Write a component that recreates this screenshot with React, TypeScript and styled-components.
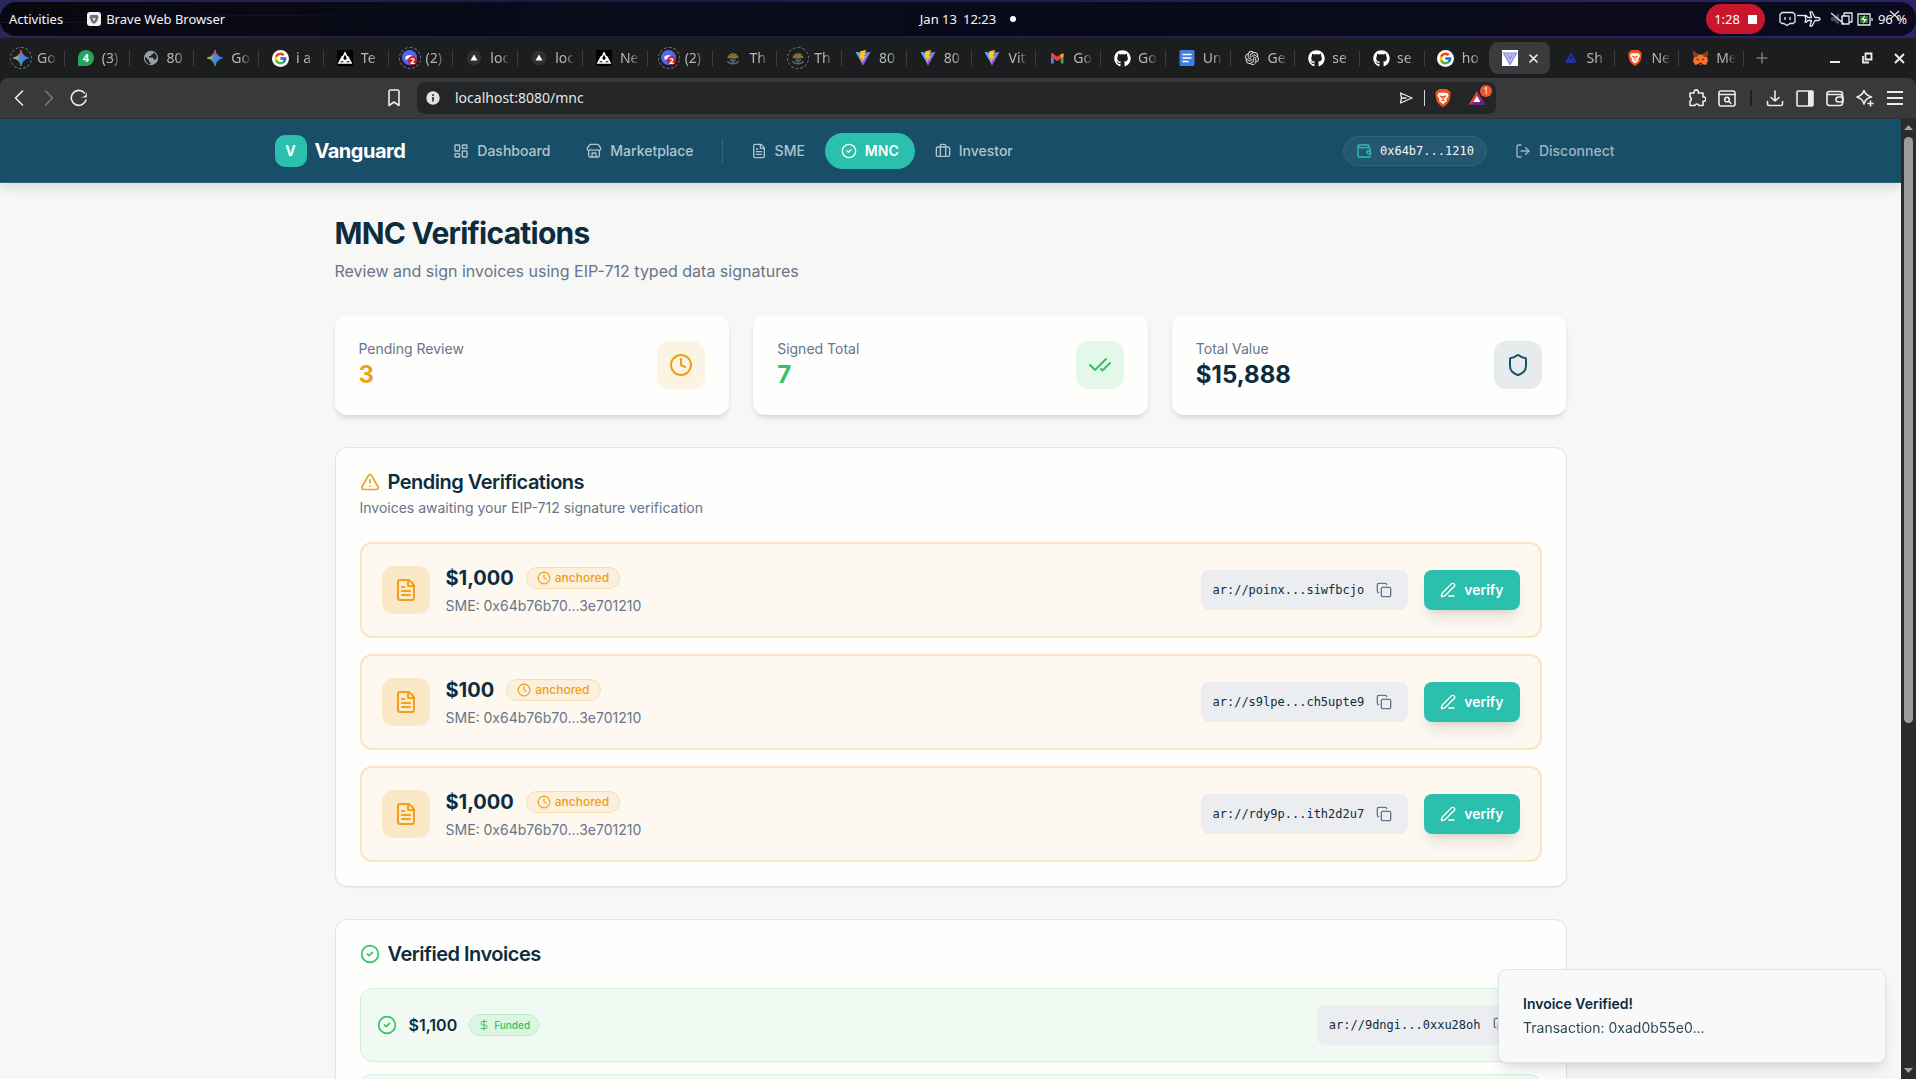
import React from 'react';
import styled, { createGlobalStyle, css } from 'styled-components';
import {
  Briefcase,
  CheckCheck,
  CircleCheck,
  Clock,
  Copy,
  DollarSign,
  FileText,
  LayoutDashboard,
  LogOut,
  PenLine,
  Shield,
  Store,
  TriangleAlert,
  Wallet,
} from 'lucide-react';
import { FcGoogle } from 'react-icons/fc';
import { FaGithub } from 'react-icons/fa';
import { SiOpenai } from 'react-icons/si';

const color = {
  ink: '#0d2c3d',
  muted: '#677489',
  page: '#f7f8f6',
  card: '#fefefd',
  line: '#e0e4e5',
  nav: '#184e68',
  teal: '#2bc0ae',
  amber: '#eca01c',
  green: '#2fc463',
  chip: '#ebedf0',
};

const uiFont = '"Noto Sans", "Open Sans", sans-serif';
const appFont = 'Inter, "Liberation Sans", sans-serif';
const monoFont = '"DejaVu Sans Mono", "Liberation Mono", monospace';

const GlobalStyle = createGlobalStyle`
  *, *::before, *::after { box-sizing: border-box; }
  body { margin: 0; background: #1b1d1e; font-family: ${appFont}; }
  h1, h2, p, ul { margin: 0; padding: 0; }
  button { border: 0; background: none; padding: 0; margin: 0; color: inherit; font: inherit; cursor: pointer; }
  svg { display: block; flex: none; }
`;

/* ---------- Desktop shell ---------- */

const Desktop = styled.div`
  display: flex;
  flex-direction: column;
  height: 100vh;
  overflow: hidden;
`;

const SystemBar = styled.header`
  flex: none;
  height: 38px;
  padding: 2px 0;
  background: linear-gradient(90deg, #2b2659, #1b1a3d 30%, #221d50 60%, #2b2468);
  color: #f4f4f6;
  font: 13px/18px ${uiFont};
`;

const SystemBarInner = styled.div`
  display: grid;
  grid-template-columns: 1fr auto 1fr;
  align-items: center;
  height: 34px;
  padding: 0 9px;
  border-radius: 16px;
  background:
    radial-gradient(ellipse at 2% 60%, #191637 0, transparent 4%),
    radial-gradient(ellipse at 14% 40%, #14132c 0, transparent 5%),
    linear-gradient(90deg, #07080f, #0a0b1b 30%, #090a19 60%, #0b0a1e);
`;

const SystemGroup = styled.div<{ $end?: boolean }>`
  display: flex;
  align-items: center;
  justify-content: ${(p) => (p.$end ? 'flex-end' : 'flex-start')};
  gap: ${(p) => (p.$end ? '14px' : '24px')};
`;

const AppLabel = styled.button`
  display: flex;
  align-items: center;
  gap: 5px;
`;

const DateLabel = styled.button`
  display: flex;
  align-items: center;
  gap: 6px;
  padding-left: 20px;
`;

const NotifyDot = styled.span`
  width: 6px;
  height: 6px;
  margin-left: 8px;
  border-radius: 50%;
  background: #fff;
`;

const RecordPill = styled.button`
  display: flex;
  align-items: center;
  gap: 8px;
  height: 30px;
  padding: 0 8px;
  border-radius: 15px;
  background: #c8172c;
  color: #fff;
`;

const StopSquare = styled.span`
  width: 9px;
  height: 9px;
  background: #fff;
`;

const StatusArea = styled.div`
  display: flex;
  align-items: center;
  gap: 2px;
`;

const Battery = styled.span`
  position: relative;
  display: block;
  white-space: nowrap;

  svg {
    position: absolute;
    left: 9px;
    top: 0;
  }
`;

/* ---------- Browser chrome ---------- */

const TabStrip = styled.div`
  display: flex;
  align-items: center;
  flex: none;
  height: 40px;
  background: #1b1d1e;
  font: 14px/20px ${uiFont};
`;

const Tabs = styled.div`
  display: flex;
  flex: 1;
  min-width: 0;
`;

const TabButton = styled.button`
  display: flex;
  align-items: center;
  flex: 1 1 0;
  gap: 6px;
  min-width: 0;
  height: 32px;
  padding-left: 11px;
  color: #b4b7b8;
  text-align: left;

  &::after {
    content: '';
    width: 1px;
    height: 16px;
    margin-left: auto;
    background: #3b3e40;
  }
`;

const ActiveTab = styled.div`
  display: flex;
  align-items: center;
  justify-content: space-between;
  flex: none;
  width: 60px;
  height: 32px;
  padding: 0 10px 0 12px;
  border-radius: 8px;
  background: #393b3d;
  color: #f1f1f1;

  button { display: grid; place-items: center; width: 12px; height: 16px; }
`;

const TabTitle = styled.span`
  width: 24px;
  white-space: nowrap;
  mask-image: linear-gradient(90deg, #000 10px, transparent 20px);
`;

const Favicon = styled.span<{ $ring?: boolean }>`
  display: grid;
  place-items: center;
  flex: none;
  width: 20px;
  height: 20px;
  border-radius: 50%;
  ${(p) =>
    p.$ring &&
    css`
      outline: 1px dashed #6f7375;
    `}
`;

const WindowControls = styled.div`
  display: flex;
  align-items: center;
  flex: none;
  width: 172px;
  padding: 0 7px 0 8px;
  color: #f1f1f1;
`;

const WindowButtons = styled.div`
  display: flex;
  gap: 12px;
  margin-left: auto;
`;

const Toolbar = styled.div`
  display: grid;
  grid-template-columns: 417px 1fr 420px;
  align-items: center;
  flex: none;
  height: 41px;
  background: #38393b;
  border-bottom: 1px solid #303133;
  border-radius: 8px 8px 0 0;
  color: #f0f0f0;
`;

const ToolGroup = styled.div<{ $side: 'start' | 'end' }>`
  display: flex;
  align-items: center;
  gap: 10px;
  padding: ${(p) => (p.$side === 'start' ? '0 13px 0 9px' : '0 11px')};
  justify-content: ${(p) => (p.$side === 'start' ? 'flex-start' : 'flex-end')};
`;

const ToolButton = styled.button<{ $dim?: boolean; $push?: boolean }>`
  display: grid;
  place-items: center;
  width: 20px;
  height: 24px;
  margin-left: ${(p) => (p.$push ? 'auto' : '0')};
  color: ${(p) => (p.$dim ? '#77797b' : '#ececec')};
`;

const ToolDivider = styled.span`
  width: 2px;
  height: 16px;
  margin: 0 3px;
  background: #1f2021;
`;

const AddressBar = styled.div`
  display: flex;
  align-items: center;
  gap: 15px;
  height: 32px;
  padding: 0 9px;
  border-radius: 8px;
  background: #232527;
`;

const AddressInput = styled.input`
  flex: 1;
  min-width: 0;
  border: 0;
  padding: 0;
  outline: 0;
  background: none;
  color: #e4e6e7;
  font: 14px/20px ${uiFont};
`;

const AddressActions = styled.div`
  display: flex;
  align-items: center;
  gap: 8px;
`;

const AddressDivider = styled.span`
  width: 1px;
  height: 16px;
  background: #d4d4d4;
`;

const RewardsButton = styled(ToolButton)`
  position: relative;
  margin-left: 6px;
`;

const RewardsBadge = styled.span`
  position: absolute;
  top: -1px;
  right: -5px;
  width: 12px;
  height: 12px;
  border-radius: 50%;
  background: #f4532c;
  color: #fff;
  font: 9px/12px ${uiFont};
  text-align: center;
`;

const Viewport = styled.div`
  position: relative;
  display: flex;
  flex: 1;
  min-height: 0;
`;

const ScrollTrack = styled.div`
  display: flex;
  flex-direction: column;
  align-items: center;
  gap: 7px;
  flex: none;
  width: 15px;
  padding: 6px 0;
  background: #2b2b2a;
  color: #a3a3a0;
`;

const ScrollThumb = styled.div`
  width: 9px;
  flex: 0 1 586px;
  margin-bottom: auto;
  border-radius: 5px;
  background: #9c9d9a;
`;

/* ---------- Vanguard page ---------- */

const Page = styled.div`
  flex: 1;
  min-width: 0;
  overflow: hidden;
  background: ${color.page};
  color: ${color.ink};
  font: 14px/20px ${appFont};
`;

const NavBar = styled.header`
  position: relative;
  height: 64px;
  background: ${color.nav};
  border-bottom: 1px solid #2f607a;
  box-shadow: 0 4px 12px rgba(20, 30, 30, 0.14);
`;

const NavInner = styled.div`
  display: flex;
  align-items: center;
  max-width: 1400px;
  height: 100%;
  margin: 0 auto;
  padding: 0 24px;
`;

const Brand = styled.a`
  display: flex;
  align-items: center;
  gap: 8px;
  color: #fff;
  text-decoration: none;
  font-size: 20px;
  font-weight: 700;
  line-height: 28px;
  letter-spacing: -0.025em;
`;

const BrandMark = styled.span`
  display: grid;
  place-items: center;
  width: 32px;
  height: 32px;
  border-radius: 10px;
  background: ${color.teal};
  font-size: 14px;
  letter-spacing: 0;
`;

const NavLinks = styled.nav`
  display: flex;
  align-items: center;
  gap: 4px;
  margin-left: 32px;
`;

const NavLink = styled.a<{ $active?: boolean }>`
  display: flex;
  align-items: center;
  gap: 8px;
  height: 36px;
  padding: 0 16px;
  border-radius: 18px;
  background: ${(p) => (p.$active ? color.teal : 'transparent')};
  color: ${(p) => (p.$active ? '#fff' : '#b0c5cf')};
  font-weight: ${(p) => (p.$active ? 600 : 500)};
  text-decoration: none;
`;

const NavDivider = styled.span`
  width: 1px;
  height: 24px;
  margin: 0 8px;
  background: #35657d;
`;

const Account = styled.div`
  display: flex;
  align-items: center;
  gap: 16px;
  margin-left: auto;
`;

const WalletPill = styled.span`
  display: flex;
  align-items: center;
  gap: 8px;
  height: 30px;
  padding: 0 12px;
  border: 1px solid #34647c;
  border-radius: 15px;
  background: #255870;
  color: #f3f6f8;
  font: 12px/16px ${monoFont};
`;

const DisconnectButton = styled.button`
  display: flex;
  align-items: center;
  gap: 8px;
  height: 36px;
  padding: 0 12px;
  color: #9db6c2;
  font-weight: 500;
`;

const Main = styled.main`
  max-width: 1280px;
  margin: 0 auto;
  padding: 32px 24px;
  display: grid;
  gap: 32px;
`;

const PageHeading = styled.div`
  display: grid;
  gap: 8px;
`;

const Title = styled.h1`
  font-size: 30px;
  line-height: 36px;
  font-weight: 700;
  letter-spacing: -0.025em;
`;

const Subtitle = styled.p`
  font-size: 16px;
  line-height: 24px;
  color: ${color.muted};
`;

const Stats = styled.div`
  display: grid;
  grid-template-columns: repeat(3, 1fr);
  gap: 24px;
`;

const StatCard = styled.section`
  display: flex;
  align-items: center;
  justify-content: space-between;
  padding: 24px;
  border-radius: 12px;
  background: ${color.card};
  box-shadow: 0 4px 6px -1px rgba(0, 0, 0, 0.1), 0 2px 4px -2px rgba(0, 0, 0, 0.1);
`;

const StatLabel = styled.p`
  color: ${color.muted};
`;

const StatValue = styled.p<{ $tone: string }>`
  font-size: 24px;
  line-height: 32px;
  font-weight: 700;
  color: ${(p) => p.$tone};
`;

const IconTile = styled.span<{ $tone: string; $fill: string }>`
  display: grid;
  place-items: center;
  flex: none;
  width: 48px;
  height: 48px;
  border-radius: 12px;
  background: ${(p) => p.$fill};
  color: ${(p) => p.$tone};
`;

const Card = styled.section`
  padding: 24px;
  border: 1px solid ${color.line};
  border-radius: 12px;
  background: ${color.card};
  box-shadow: 0 1px 2px rgba(0, 0, 0, 0.05);
`;

const CardHeader = styled.div`
  display: grid;
  gap: 6px;
  padding-bottom: 24px;
`;

const CardTitle = styled.h2<{ $tone: string }>`
  display: flex;
  align-items: center;
  gap: 8px;
  font-size: 20px;
  line-height: 20px;
  font-weight: 600;
  letter-spacing: -0.025em;

  svg { color: ${(p) => p.$tone}; }
`;

const CardText = styled.p`
  color: ${color.muted};
`;

const RowList = styled.ul<{ $gap: number }>`
  display: grid;
  gap: ${(p) => p.$gap}px;
  list-style: none;
`;

const PendingRow = styled.li`
  display: flex;
  align-items: center;
  gap: 16px;
  padding: 20px;
  border: 2px solid #f9e5c2;
  border-radius: 12px;
  background: #fdf9f0;
`;

const VerifiedRow = styled.li`
  display: flex;
  align-items: center;
  gap: 12px;
  padding: 16px;
  border: 1px solid #cdf2da;
  border-radius: 12px;
  background: #f0faf2;

  > svg { color: ${color.green}; }
`;

const PendingInfo = styled.div`
  display: grid;
  gap: 4px;
  margin-right: auto;
`;

const AmountLine = styled.div`
  display: flex;
  align-items: center;
  gap: 12px;
  height: 28px;
`;

const Amount = styled.strong<{ $small?: boolean }>`
  font-size: ${(p) => (p.$small ? '16px' : '20px')};
  line-height: ${(p) => (p.$small ? '24px' : '28px')};
  font-weight: ${(p) => (p.$small ? 600 : 700)};
`;

const Badge = styled.span<{ $kind: 'anchored' | 'funded' }>`
  display: flex;
  align-items: center;
  gap: 4px;
  height: 22px;
  border: 1px solid;
  border-radius: 11px;
  font-weight: 500;
  line-height: 16px;
  ${(p) =>
    p.$kind === 'anchored'
      ? css`
          padding: 0 10px;
          font-size: 12px;
          color: ${color.amber};
          background: #fbf0db;
          border-color: #f8dfb2;
        `
      : css`
          padding: 0 8px;
          margin-right: auto;
          font-size: 10px;
          color: ${color.green};
          background: #dcf6e2;
          border-color: #bdebcb;
        `}
`;

const HashChip = styled.span`
  display: flex;
  align-items: center;
  gap: 8px;
  height: 40px;
  padding: 0 12px;
  border-radius: 8px;
  background: ${color.chip};
  font: 12px/16px ${monoFont};
`;

const CopyButton = styled.button`
  display: grid;
  place-items: center;
  width: 24px;
  height: 24px;
  color: #64748b;
`;

const VerifyButton = styled.button`
  display: flex;
  align-items: center;
  gap: 8px;
  height: 40px;
  padding: 0 16px;
  border-radius: 8px;
  background: ${color.teal};
  color: #fff;
  font-weight: 600;
  box-shadow: 0 10px 15px -3px rgba(0, 0, 0, 0.1), 0 4px 6px -4px rgba(0, 0, 0, 0.1);
`;

const Toast = styled.div`
  position: absolute;
  right: 30px;
  bottom: 16px;
  display: grid;
  gap: 4px;
  width: 388px;
  padding: 24px;
  border: 1px solid #e0e3e4;
  border-radius: 8px;
  background: #f8f9f8;
  color: ${color.ink};
  font: 14px/20px ${appFont};
  box-shadow: 0 10px 15px -3px rgba(0, 0, 0, 0.1), 0 4px 6px -4px rgba(0, 0, 0, 0.1);

  strong { font-weight: 600; }
  p { opacity: 0.88; }
`;

/* ---------- Drawn icons ---------- */

const GeminiIcon = () => (
  <svg width="16" height="16" viewBox="0 0 16 16">
    <defs>
      <linearGradient id="gemX" x1="0" y1="0" x2="1" y2="0">
        <stop offset="0.05" stopColor="#f7c22e" />
        <stop offset="0.42" stopColor="#4b8bea" />
        <stop offset="1" stopColor="#3b7df0" />
      </linearGradient>
      <linearGradient id="gemTop" x1="0" y1="0" x2="0" y2="1">
        <stop offset="0.05" stopColor="#ec4434" />
        <stop offset="0.42" stopColor="#ec4434" stopOpacity="0" />
      </linearGradient>
      <linearGradient id="gemLow" x1="0.3" y1="1" x2="0.45" y2="0.5">
        <stop offset="0" stopColor="#2fa85a" />
        <stop offset="0.9" stopColor="#2fa85a" stopOpacity="0" />
      </linearGradient>
    </defs>
    {['gemX', 'gemTop', 'gemLow'].map((fill) => (
      <path
        key={fill}
        d="M8 0.300C8.600 4.200 11.800 7.400 15.700 8 11.800 8.600 8.600 11.800 8 15.700 7.400 11.800 4.200 8.600 0.300 8 4.200 7.400 7.400 4.200 8 0.300Z"
        fill={`url(#${fill})`}
        stroke={`url(#${fill})`}
        strokeWidth="0.800"
      />
    ))}
  </svg>
);

const ChatIcon = () => (
  <svg width="18" height="18" viewBox="0 0 18 18">
    <path d="M9 1a8 8 0 1 1 0 16H1V9a8 8 0 0 1 8-8Z" fill="#23a55a" />
    <text x="9" y="13" textAnchor="middle" fontSize="11" fontWeight="700" fontFamily="Noto Sans, sans-serif" fill="#fff">4</text>
  </svg>
);

const GlobeIcon = () => (
  <svg width="16" height="16" viewBox="0 0 16 16">
    <circle cx="8" cy="8" r="7.200" fill="#9b9fa1" />
    <path d="M2.200 6.500 6 10.500v1.200l1.500 1.300v1.300C4.500 14 2 11.500 2 8Z" fill="#1b1d1e" />
    <path d="M10.500 2.300c.3 1.700-.8 2-1.800 2.200-.7.200-.3 1.300-1 1.500H6v1.400h3.700c.7 0 .6 1.900 1.300 2h1.700c.5-.5 1-1.400 1.100-2.300-.4-2-1.500-3.700-3.300-4.800Z" fill="#1b1d1e" />
  </svg>
);

const GoogleDisc = () => (
  <svg width="17" height="17" viewBox="0 0 17 17">
    <circle cx="8.500" cy="8.500" r="8.500" fill="#fff" />
    <FcGoogle x="1.500" y="1.500" width="14" height="14" />
  </svg>
);

const KnotIcon = () => (
  <svg width="16" height="16" viewBox="0 0 16 16">
    <rect width="16" height="16" fill="#000" />
    <g fill="none" stroke="#fff" strokeWidth="1.600">
      <path d="M5.500 8 8 3l2.500 5M2 13l3-5.500 3 5.500ZM14 13l-3-5.500L8 13ZM4 10.500h8" />
    </g>
  </svg>
);

const DiscordIcon = () => (
  <svg width="16" height="16" viewBox="0 0 16 16">
    <circle cx="7.500" cy="7.500" r="7.500" fill="#5865f2" />
    <path d="M3.500 10V6.500c1.500-1.800 6-1.800 7.500 0V10l-2-1H5.500Z" fill="#fff" />
    <circle cx="10.500" cy="10.500" r="4.500" fill="#c9202b" />
    <text x="10.500" y="13.500" textAnchor="middle" fontSize="8" fontWeight="700" fontFamily="Noto Sans, sans-serif" fill="#fff">2</text>
  </svg>
);

const VercelIcon = () => (
  <svg width="16" height="16" viewBox="0 0 16 16">
    <circle cx="8" cy="8" r="7.500" fill="#2e3031" />
    <path d="m8 4.500 3.500 6h-7Z" fill="#fff" />
  </svg>
);

const TreeIcon = () => (
  <svg width="16" height="16" viewBox="0 0 16 16">
    <path d="M2.500 8.500a5.500 5.500 0 1 1 11 0l-2-.8-1.800 1L8 7.500 6.300 8.700l-1.800-1Z" fill="#8a7a2c" />
    <path d="M4 5.500 6 6M6.500 3.500 8 5l1.500-1.500M12 5.500 10 6" fill="none" stroke="#4b431c" strokeWidth="0.900" />
    <path d="M8 7v6M5 9.500l3 2 3-2M2.500 11c2 3.800 9 3.800 11 0" fill="none" stroke="#5b6271" strokeWidth="1.500" />
  </svg>
);

const ViteIcon = ({ pale }: { pale?: boolean }) => (
  <svg width="16" height="16" viewBox="0 0 16 16">
    <defs>
      <linearGradient id="viteV" x1="0" y1="0" x2="0.700" y2="1">
        <stop offset="0" stopColor="#41d1ff" />
        <stop offset="1" stopColor="#a034fe" />
      </linearGradient>
    </defs>
    {pale && <rect width="16" height="16" fill="#fff" />}
    {pale ? (
      <g fill="none" strokeWidth="1.200">
        <path d="M1.500 3 8 14.500 14.500 3Z" fill="#b9c4f5" stroke="#7d8be0" />
        <path d="M5.500 3.500 8 9l2.500-5.500" stroke="#d276d8" />
      </g>
    ) : (
      <>
        <path d="M0.500 1.800 8 15.800 15.500 1.800 8 3.200Z" fill="url(#viteV)" />
        <path d="m11.200 0-6 1.200-.4 7.600 2.300-.5-.8 4.700 4.800-7-2.200.4Z" fill="#ffc61c" />
      </>
    )}
  </svg>
);

const GmailIcon = () => (
  <svg width="16" height="16" viewBox="0 0 16 16">
    <path d="M2 5v8.500h2.800V7.500Z" fill="#4285f4" />
    <path d="M14.500 5v8.500h-2.800V7.500Z" fill="#34a853" />
    <path d="M11.700 4.500 14.500 3V6.500l-2.800 2Z" fill="#fbbc04" />
    <path d="M2 3.500 3.500 3 8.200 6.800 12 3.800v4.500l-3.800 3L4.800 8.500 2 6.500Z" fill="#ea4335" />
  </svg>
);

const DocsIcon = () => (
  <svg width="16" height="18" viewBox="0 0 16 18">
    <rect x="0.500" y="1" width="15" height="16" rx="1.500" fill="#3f7fe8" />
    <path d="M3.500 5.500h9M3.500 9h9M3.500 12.500h6" stroke="#fff" strokeWidth="1.600" />
  </svg>
);

const BlueTriIcon = () => (
  <svg width="12" height="12" viewBox="0 0 12 12">
    <path d="M4 6 6 2l2 4M1.500 10 3.500 6 6 10ZM10.500 10 8.500 6 6 10ZM3 8h6" fill="none" stroke="#2733c4" strokeWidth="1.500" />
  </svg>
);

const BraveIcon = ({ size = 16 }: { size?: number }) => (
  <svg width={size} height={size} viewBox="0 0 16 16">
    <path d="M4.500 0h7l1.500 1.500h1l.8 2.500-.8 5.500C13 12.500 10 15 8 16 6 15 3 12.500 2 9.500L1.200 4 2 1.500h1Z" fill="#f1511b" />
    <path d="M4 3.500 8 3l4 .5L13 6l-2 3 .5 1.500L8 13.500 4.500 10.500 5 9 3 6Z" fill="#fff" />
    <path d="m5 6 2 .8-.5 1.400M11 6l-2 .8.500 1.400M6.500 10.500 8 9.700l1.500.8M8 6v3" fill="none" stroke="#f1511b" strokeWidth="1" />
  </svg>
);

const FoxIcon = () => (
  <svg width="17" height="16" viewBox="0 0 17 16">
    <path d="m1 1 5.500 3.500h4L16 1l-1 6 1 4-2 4-3.500-1-2 1-2-1L3 15l-2-4 1-4Z" fill="#f6742a" />
    <path d="m1 1 5.500 3.500L5 7 2 7ZM16 1l-5.500 3.500L12 7l3 0Z" fill="#8c3b1b" />
    <path d="m5 9 1.500 1M12 9l-1.500 1M7 13.500h3" stroke="#2b2b2b" strokeWidth="1.300" />
  </svg>
);

const RewardsIcon = () => (
  <svg width="18" height="16" viewBox="0 0 18 16">
    <path d="M9 1 0.500 15H9L9 6Z" fill="#e8442e" />
    <path d="M9 1v7l8.500 7Z" fill="#9e2a8a" />
    <path d="M0.500 15h17L9 10Z" fill="#5f2b8f" />
    <path d="m9 6 3.500 6h-7Z" fill="#fff" />
  </svg>
);

const stroke = { fill: 'none', stroke: 'currentColor', strokeWidth: 1.6, strokeLinejoin: 'round', strokeLinecap: 'round' } as const;

const StatusIcons = () => (
  <svg width="97" height="20" viewBox="0 0 97 20">
    <path d="M52 8h3l5-4v12l-5-4h-3zM62 7v6h2V7z" fill="#494a55" />
    <g fill="none" stroke="#e9e9ec" strokeWidth="1.300" strokeLinejoin="round">
      <path d="M3 3.500h11l2 2V13l-2 1.500h-3l-3 2-3-2H3L1 13V5.500ZM6 8v3M11 8v3" />
      <path d="M18 6.500h10" />
      <path d="M41 10c0-1-1-1.500-2.500-1.500H36L33 3h-2l1.500 5.500H29L27.500 7H26l1 3-1 3h1.500L29 11.500h3.500L31 17h2l3-5.500h2.500c1.500 0 2.500-.5 2.500-1.500Z" />
      <path d="m52 4 13 11M63 7h7v8h-7zM65 7V4h8v9h-3" />
      <path d="M79 5h12v11H79zM93 9v3" />
    </g>
    <path d="M81 7h8v7h-8z" fill="#2d7a32" />
    <path d="m86 6-4 5h3l-1 4 4-5h-3z" fill="#fff" />
  </svg>
);

/* ---------- Data ---------- */

type TabItem = { icon: React.ReactNode; title: string; ring?: boolean };

const leadingTabs: TabItem[] = [
  { icon: <GeminiIcon />, title: 'Go', ring: true },
  { icon: <ChatIcon />, title: '(3)' },
  { icon: <GlobeIcon />, title: '80' },
  { icon: <GeminiIcon />, title: 'Go' },
  { icon: <GoogleDisc />, title: 'i a' },
  { icon: <KnotIcon />, title: 'Te' },
  { icon: <DiscordIcon />, title: '(2)', ring: true },
  { icon: <VercelIcon />, title: 'loc' },
  { icon: <VercelIcon />, title: 'loc' },
  { icon: <KnotIcon />, title: 'Ne' },
  { icon: <DiscordIcon />, title: '(2)', ring: true },
  { icon: <TreeIcon />, title: 'Th' },
  { icon: <TreeIcon />, title: 'Th', ring: true },
  { icon: <ViteIcon />, title: '80' },
  { icon: <ViteIcon />, title: '80' },
  { icon: <ViteIcon />, title: 'Vit' },
  { icon: <GmailIcon />, title: 'Go' },
  { icon: <FaGithub size={17} color="#fff" />, title: 'Go' },
  { icon: <DocsIcon />, title: 'Un' },
  { icon: <SiOpenai size={14} color="#e4e4e4" />, title: 'Ge' },
  { icon: <FaGithub size={17} color="#fff" />, title: 'se' },
  { icon: <FaGithub size={17} color="#fff" />, title: 'se' },
  { icon: <GoogleDisc />, title: 'ho' },
];

const trailingTabs: TabItem[] = [
  { icon: <BlueTriIcon />, title: 'Sh' },
  { icon: <BraveIcon />, title: 'Ne' },
  { icon: <FoxIcon />, title: 'Me' },
];

const pending = [
  { amount: '$1,000', sme: '0x64b76b70...3e701210', hash: 'ar://poinx...siwfbcjo' },
  { amount: '$100', sme: '0x64b76b70...3e701210', hash: 'ar://s9lpe...ch5upte9' },
  { amount: '$1,000', sme: '0x64b76b70...3e701210', hash: 'ar://rdy9p...ith2d2u7' },
];

const verified: { amount: string; hash: string }[] = [
  { amount: '$1,100', hash: 'ar://9dngi...0xxu28oh' },
];

const BrowserTab = ({ icon, title, ring }: TabItem) => (
  <TabButton type="button">
    <Favicon $ring={ring}>{icon}</Favicon>
    <TabTitle>{title}</TabTitle>
  </TabButton>
);

const Hash = ({ value }: { value: string }) => (
  <HashChip>
    {value}
    <CopyButton type="button" aria-label="Copy">
      <Copy size={16} />
    </CopyButton>
  </HashChip>
);

export default function App() {
  return (
    <Desktop>
      <GlobalStyle />

      <SystemBar>
        <SystemBarInner>
          <SystemGroup>
            <button type="button">Activities</button>
            <AppLabel type="button">
              <svg width="14" height="14" viewBox="0 0 14 14">
                <rect width="14" height="14" rx="3" fill="#f1f1f1" />
                <path d="M3.500 3h7l1 2.500L9.500 10 7 12 4.500 10l-2-4.500Z" fill="#6d6d70" />
                <path d="m5 5.500 2 1 2-1L7 9.500Z" fill="#f1f1f1" />
              </svg>
              Brave Web Browser
            </AppLabel>
          </SystemGroup>
          <DateLabel type="button">
            <span>Jan 13</span>
            <span>12:23</span>
            <NotifyDot />
          </DateLabel>
          <SystemGroup $end>
            <RecordPill type="button">
              1:28
              <StopSquare />
            </RecordPill>
            <StatusArea>
              <StatusIcons />
              <Battery>
                96 %
                <svg width="16" height="16" viewBox="0 0 16 16">
                  <path d="m3 1 9 8M12 1 3 9" stroke="#e9e9ec" strokeWidth="1.200" />
                </svg>
              </Battery>
            </StatusArea>
          </SystemGroup>
        </SystemBarInner>
      </SystemBar>

      <TabStrip>
        <Tabs>
          {leadingTabs.map((tab, i) => (
            <BrowserTab key={i} {...tab} />
          ))}
          <ActiveTab>
            <ViteIcon pale />
            <button type="button" aria-label="Close tab">
              <svg width="9" height="9" viewBox="0 0 9 9">
                <path d="m1 1 7 7M8 1 1 8" {...stroke} />
              </svg>
            </button>
          </ActiveTab>
          {trailingTabs.map((tab, i) => (
            <BrowserTab key={i} {...tab} />
          ))}
        </Tabs>
        <WindowControls>
          <ToolButton type="button" aria-label="New tab" $dim>
            <svg width="12" height="12" viewBox="0 0 12 12">
              <path d="M6 1v10M1 6h10" {...stroke} />
            </svg>
          </ToolButton>
          <WindowButtons>
            <ToolButton type="button" aria-label="Minimise">
              <svg width="12" height="12" viewBox="0 0 12 12">
                <path d="M1 10h10" stroke="currentColor" strokeWidth="2" />
              </svg>
            </ToolButton>
            <ToolButton type="button" aria-label="Restore">
              <svg width="12" height="12" viewBox="0 0 12 12">
                <path d="M4.500 1.500h6v6h-6zM2 4v6.500h6" fill="none" stroke="currentColor" strokeWidth="1.800" />
              </svg>
            </ToolButton>
            <ToolButton type="button" aria-label="Close">
              <svg width="11" height="11" viewBox="0 0 11 11">
                <path d="m1 1 9 9M10 1 1 10" stroke="currentColor" strokeWidth="2" />
              </svg>
            </ToolButton>
          </WindowButtons>
        </WindowControls>
      </TabStrip>

      <Toolbar>
        <ToolGroup $side="start">
          <ToolButton type="button" aria-label="Back">
            <svg width="10" height="16" viewBox="0 0 10 16">
              <path d="M8.500 1 1.500 8l7 7" {...stroke} />
            </svg>
          </ToolButton>
          <ToolButton type="button" aria-label="Forward" $dim>
            <svg width="10" height="16" viewBox="0 0 10 16">
              <path d="m1.500 1 7 7-7 7" {...stroke} />
            </svg>
          </ToolButton>
          <ToolButton type="button" aria-label="Reload">
            <svg width="18" height="18" viewBox="0 0 18 18">
              <path d="M14.500 4A7.500 7.500 0 1 0 16 11" {...stroke} />
              <path d="M16.800 2.500v6h-6a7 7 0 0 0 6-6Z" fill="currentColor" />
            </svg>
          </ToolButton>
          <ToolButton type="button" aria-label="Bookmark" $push>
            <svg width="12" height="18" viewBox="0 0 12 18">
              <path d="M1 2.500A1.500 1.500 0 0 1 2.500 1h7A1.500 1.500 0 0 1 11 2.500V16.500l-5-3.500-5 3.500Z" {...stroke} />
            </svg>
          </ToolButton>
        </ToolGroup>
        <AddressBar>
          <svg width="14" height="14" viewBox="0 0 14 14">
            <circle cx="7" cy="7" r="6.700" fill="#e1e2e3" />
            <path d="M7 6v4.500M7 3.300V5" stroke="#232527" strokeWidth="1.600" />
          </svg>
          <AddressInput aria-label="Address" defaultValue="localhost:8080/mnc" />
          <AddressActions>
            <ToolButton type="button" aria-label="Share">
              <svg width="14" height="12" viewBox="0 0 14 12">
                <path d="M1.500 1 13 6 1.500 11l1-5ZM2.500 6H7" {...stroke} strokeWidth="1.300" />
              </svg>
            </ToolButton>
            <AddressDivider />
            <ToolButton type="button" aria-label="Shields">
              <BraveIcon size={18} />
            </ToolButton>
            <RewardsButton type="button" aria-label="Rewards">
              <RewardsIcon />
              <RewardsBadge>1</RewardsBadge>
            </RewardsButton>
          </AddressActions>
        </AddressBar>
        <ToolGroup $side="end">
          <ToolButton type="button" aria-label="Extensions">
            <svg width="18" height="18" viewBox="0 0 18 18">
              <path d="M2 4h4.200a2.200 2.200 0 1 1 4 0H15v4a2.200 2.200 0 1 1 0 4.200V16.500h-4a2.200 2.200 0 0 0-4.200 0H2V12a2.200 2.200 0 0 0 0-4Z" {...stroke} />
            </svg>
          </ToolButton>
          <ToolButton type="button" aria-label="Search tabs">
            <svg width="18" height="17" viewBox="0 0 18 17">
              <rect x="1" y="1" width="16" height="15" rx="2" {...stroke} />
              <path d="M1 4.500h16" {...stroke} />
              <circle cx="9" cy="9.500" r="2.300" {...stroke} />
              <path d="m10.800 11.300 2 2" {...stroke} />
            </svg>
          </ToolButton>
          <ToolDivider />
          <ToolButton type="button" aria-label="Downloads">
            <svg width="18" height="18" viewBox="0 0 18 18">
              <path d="M9 2v10M5 8.500 9 12l4-3.500M1.500 12.500v2.500A1.500 1.500 0 0 0 3 16.500h12a1.500 1.500 0 0 0 1.500-1.500v-2.500" {...stroke} />
            </svg>
          </ToolButton>
          <ToolButton type="button" aria-label="Sidebar">
            <svg width="18" height="17" viewBox="0 0 18 17">
              <rect x="1" y="1" width="16" height="15" rx="1" {...stroke} />
              <path d="M12 1h5v15h-5z" fill="currentColor" />
            </svg>
          </ToolButton>
          <ToolButton type="button" aria-label="Wallet">
            <svg width="18" height="17" viewBox="0 0 18 17">
              <rect x="1" y="1.500" width="15.500" height="14" rx="2.500" {...stroke} />
              <path d="M1 4.500h13a2.500 2.500 0 0 1 2.500 2.500M17 7h-4.500a2.500 2.500 0 0 0 0 5H17Z" {...stroke} />
            </svg>
          </ToolButton>
          <ToolButton type="button" aria-label="Leo assistant">
            <svg width="18" height="18" viewBox="0 0 18 18">
              <path d="M8 1.500C9 5 10.500 6.500 15.500 8 10.500 9.500 9 11 8 15 7 11 5.500 9.500 1 8 5.500 6.500 7 5 8 1.500Z" {...stroke} />
              <path d="M14.500 12v5M12 14.500h5" {...stroke} />
            </svg>
          </ToolButton>
          <ToolButton type="button" aria-label="Menu">
            <svg width="18" height="16" viewBox="0 0 18 16">
              <path d="M1 2h16M1 8h16M1 14h16" stroke="currentColor" strokeWidth="1.800" />
            </svg>
          </ToolButton>
        </ToolGroup>
      </Toolbar>

      <Viewport>
        <Page>
          <NavBar>
            <NavInner>
              <Brand href="#">
                <BrandMark>V</BrandMark>
                Vanguard
              </Brand>
              <NavLinks>
                <NavLink href="#dashboard"><LayoutDashboard size={16} />Dashboard</NavLink>
                <NavLink href="#marketplace"><Store size={16} />Marketplace</NavLink>
                <NavDivider />
                <NavLink href="#sme"><FileText size={16} />SME</NavLink>
                <NavLink href="#mnc" $active><CircleCheck size={16} />MNC</NavLink>
                <NavLink href="#investor"><Briefcase size={16} />Investor</NavLink>
              </NavLinks>
              <Account>
                <WalletPill><Wallet size={16} color={color.teal} />0x64b7...1210</WalletPill>
                <DisconnectButton type="button"><LogOut size={16} />Disconnect</DisconnectButton>
              </Account>
            </NavInner>
          </NavBar>

          <Main>
            <PageHeading>
              <Title>MNC Verifications</Title>
              <Subtitle>Review and sign invoices using EIP-712 typed data signatures</Subtitle>
            </PageHeading>

            <Stats>
              <StatCard>
                <div>
                  <StatLabel>Pending Review</StatLabel>
                  <StatValue $tone={color.amber}>3</StatValue>
                </div>
                <IconTile $tone={color.amber} $fill="#fcf4e2"><Clock size={24} /></IconTile>
              </StatCard>
              <StatCard>
                <div>
                  <StatLabel>Signed Total</StatLabel>
                  <StatValue $tone={color.green}>7</StatValue>
                </div>
                <IconTile $tone={color.green} $fill="#e4f8e9"><CheckCheck size={24} /></IconTile>
              </StatCard>
              <StatCard>
                <div>
                  <StatLabel>Total Value</StatLabel>
                  <StatValue $tone={color.ink}>$15,888</StatValue>
                </div>
                <IconTile $tone={color.nav} $fill="#e6ebed"><Shield size={24} /></IconTile>
              </StatCard>
            </Stats>

            <Card>
              <CardHeader>
                <CardTitle $tone={color.amber}><TriangleAlert size={20} />Pending Verifications</CardTitle>
                <CardText>Invoices awaiting your EIP-712 signature verification</CardText>
              </CardHeader>
              <RowList $gap={16}>
                {pending.map((row) => (
                  <PendingRow key={row.hash}>
                    <IconTile $tone={color.amber} $fill="#fae8c6"><FileText size={24} /></IconTile>
                    <PendingInfo>
                      <AmountLine>
                        <Amount>{row.amount}</Amount>
                        <Badge $kind="anchored"><Clock size={14} />anchored</Badge>
                      </AmountLine>
                      <CardText>SME: {row.sme}</CardText>
                    </PendingInfo>
                    <Hash value={row.hash} />
                    <VerifyButton type="button"><PenLine size={16} />verify</VerifyButton>
                  </PendingRow>
                ))}
              </RowList>
            </Card>

            <Card>
              <CardHeader>
                <CardTitle $tone={color.green}><CircleCheck size={20} />Verified Invoices</CardTitle>
              </CardHeader>
              <RowList $gap={12}>
                {verified.map((row) => (
                  <VerifiedRow key={row.hash}>
                    <CircleCheck size={20} />
                    <Amount $small>{row.amount}</Amount>
                    <Badge $kind="funded"><DollarSign size={12} />Funded</Badge>
                    <Hash value={row.hash} />
                  </VerifiedRow>
                ))}
                <VerifiedRow aria-hidden="true" />
              </RowList>
            </Card>
          </Main>
        </Page>

        <ScrollTrack>
          <svg width="9" height="5" viewBox="0 0 9 5"><path d="M0 5 4.500 0 9 5Z" fill="currentColor" /></svg>
          <ScrollThumb />
          <svg width="9" height="5" viewBox="0 0 9 5"><path d="M0 0h9L4.500 5Z" fill="currentColor" /></svg>
        </ScrollTrack>

        <Toast role="status">
          <strong>Invoice Verified!</strong>
          <p>Transaction: 0xad0b55e0...</p>
        </Toast>
      </Viewport>
    </Desktop>
  );
}
